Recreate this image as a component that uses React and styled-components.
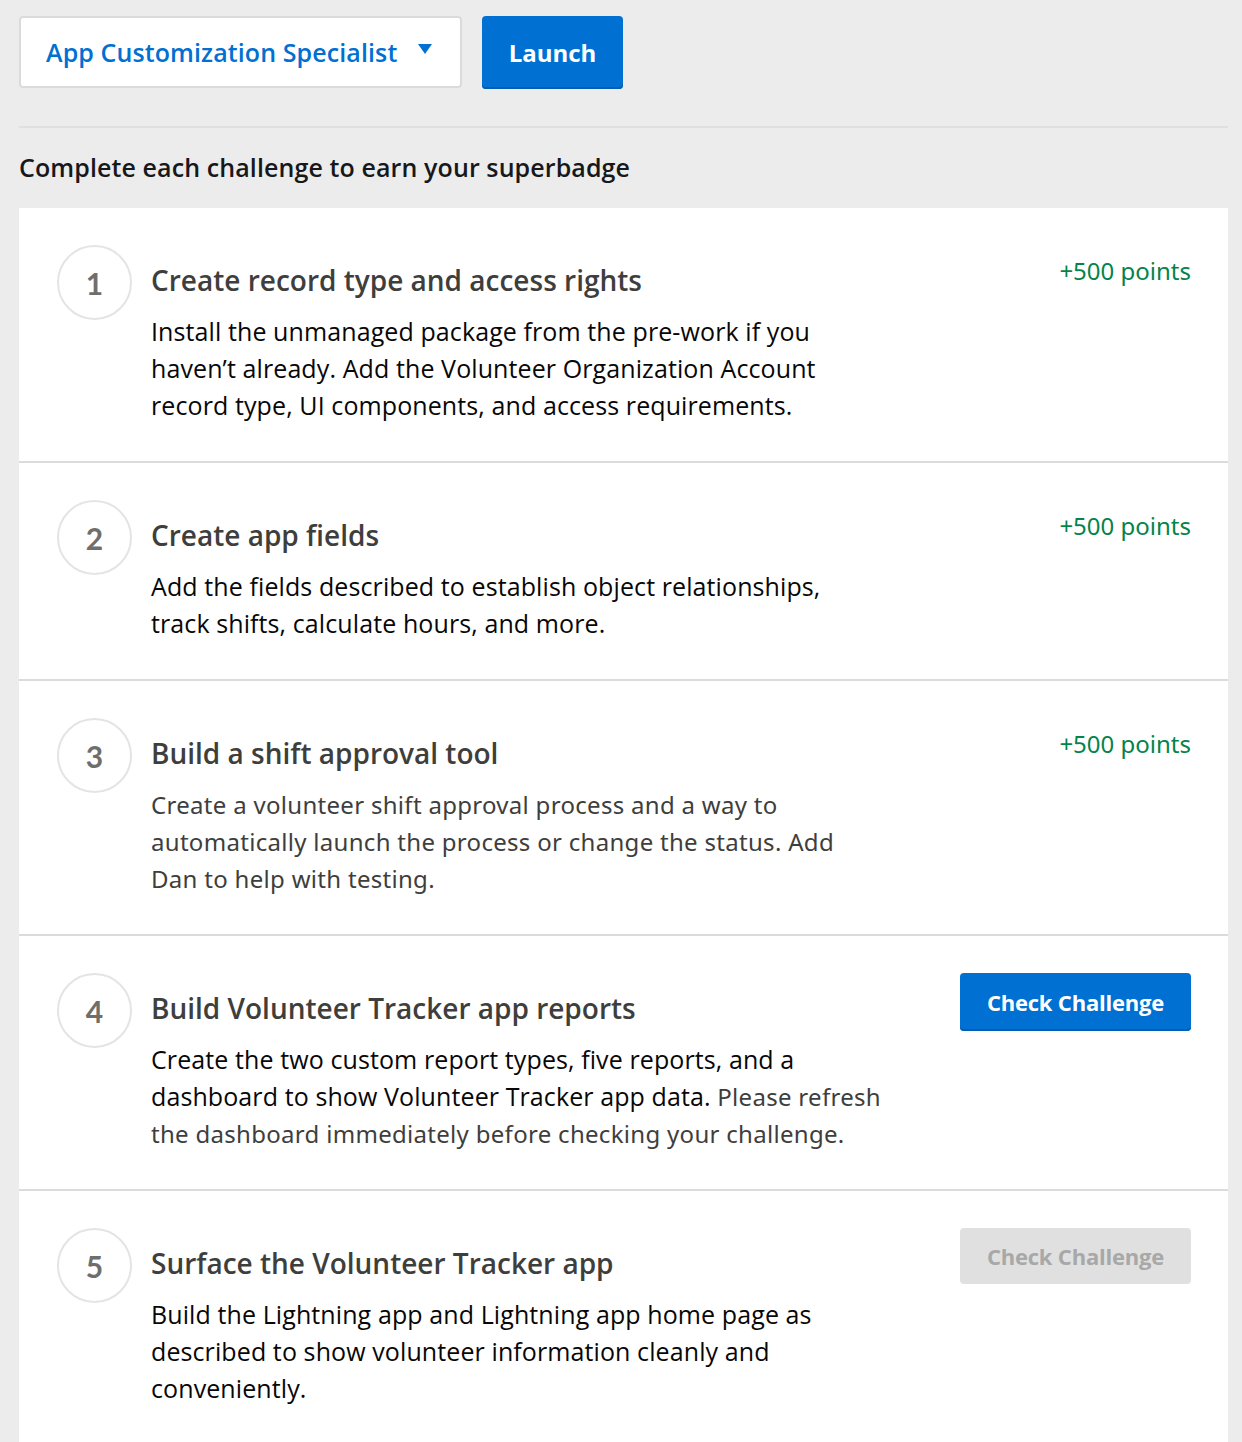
import styled, { createGlobalStyle } from "styled-components";

const GlobalStyle = createGlobalStyle`
  html, body {
    margin: 0;
    padding: 0;
    background: #ececec;
  }
  body {
    font-family: "Open Sans", "Noto Sans", sans-serif;
  }
`;

const Page = styled.div`
  padding: 16px 14px 0 19px;
`;

const TopBar = styled.div`
  display: flex;
  align-items: flex-start;
  gap: 20px;
  padding-bottom: 37px;
  border-bottom: 2px solid #e0e0e0;
`;

const Picker = styled.div`
  box-sizing: border-box;
  width: 443px;
  height: 72px;
  background: #fff;
  border: 2px solid #dddbda;
  border-radius: 4px;
  display: flex;
  align-items: center;
  padding: 0 0 0 25px;
  gap: 21px;
  color: #0070d2;
  font-size: 25px;
  font-weight: 600;
  letter-spacing: 0.1px;
  white-space: nowrap;
`;

const Caret = styled.span`
  width: 0;
  height: 0;
  border-left: 7px solid transparent;
  border-right: 7px solid transparent;
  border-top: 10px solid #0070d2;
  margin-top: -6px;
`;

const Button = styled.button`
  box-sizing: border-box;
  border: none;
  border-radius: 4px;
  font-family: "Open Sans", sans-serif;
  font-weight: 700;
  white-space: nowrap;
  color: ${(p) => (p.$disabled ? "#a8a8a8" : "#fff")};
  background: ${(p) => (p.$disabled ? "#e0e0e0" : "#0070d2")};
  box-shadow: ${(p) => (p.$disabled ? "none" : "inset 0 -2px 0 #005fb2")};
`;

const LaunchButton = styled(Button)`
  width: 141px;
  height: 73px;
  font-size: 24px;
`;

const CheckButton = styled(Button)`
  width: 231px;
  height: ${(p) => (p.$disabled ? "56px" : "58px")};
  font-size: 22px;
  letter-spacing: -0.2px;
  flex-shrink: 0;
`;

const Intro = styled.h2`
  margin: 0;
  padding: 22px 0 24px;
  font-size: 25px;
  font-weight: 600;
  color: #16181a;
  line-height: 34px;
  letter-spacing: 0.1px;
`;

const Card = styled.div`
  background: #fff;
`;

const Row = styled.div`
  display: flex;
  align-items: flex-start;
  padding: 37px 37px 37px 38px;
  border-top: ${(p) => (p.$first ? "none" : "2px solid #dddbda")};
`;

const Circle = styled.div`
  box-sizing: border-box;
  width: 75px;
  height: 75px;
  border-radius: 50%;
  border: 2px solid #e4e4e4;
  flex-shrink: 0;
  display: flex;
  align-items: center;
  justify-content: center;
  font-family: "Lato", sans-serif;
  font-size: 30px;
  font-weight: 700;
  color: #706e6b;
`;

const Body = styled.div`
  flex: 1;
  padding: 15px 0 0 19px;
  max-width: 732px;
`;

const Title = styled.h3`
  margin: 0 0 13px;
  font-size: 28px;
  font-weight: 600;
  line-height: 40px;
  color: #3e3e3c;
`;

const Text = styled.p`
  margin: 0;
  font-size: 25px;
  line-height: 37px;
  color: #080707;
  letter-spacing: 0.1px;
`;

const Muted = styled.span`
  font-family: "Noto Sans", sans-serif;
  font-size: 24px;
  color: #3e3e3c;
  letter-spacing: 0.3px;
`;

const Side = styled.div`
  margin-left: auto;
  display: flex;
  justify-content: flex-end;
`;

const Points = styled.span`
  font-family: "Noto Sans", sans-serif;
  font-size: 24px;
  line-height: 36px;
  color: #04844b;
  margin-top: 8px;
`;

const steps = [
  {
    title: "Create record type and access rights",
    text: "Install the unmanaged package from the pre-work if you haven\u2019t already. Add the Volunteer Organization Account record type, UI components, and access requirements.",
    side: "points",
  },
  {
    title: "Create app fields",
    text: "Add the fields described to establish object relationships, track shifts, calculate hours, and more.",
    side: "points",
  },
  {
    title: "Build a shift approval tool",
    muted: "Create a volunteer shift approval process and a way to automatically launch the process or change the status. Add Dan to help with testing.",
    side: "points",
  },
  {
    title: "Build Volunteer Tracker app reports",
    text: "Create the two custom report types, five reports, and a dashboard to show Volunteer Tracker app data. ",
    muted: "Please refresh the dashboard immediately before checking your challenge.",
    side: "check",
  },
  {
    title: "Surface the Volunteer Tracker app",
    text: "Build the Lightning app and Lightning app home page as described to show volunteer information cleanly and conveniently.",
    side: "disabled",
  },
];

export default function App() {
  return (
    <>
      <GlobalStyle />
      <Page>
        <TopBar>
          <Picker>
            App Customization Specialist
            <Caret />
          </Picker>
          <LaunchButton>Launch</LaunchButton>
        </TopBar>
        <Intro>Complete each challenge to earn your superbadge</Intro>
        <Card>
          {steps.map((s, i) => (
            <Row key={s.title} $first={i === 0}>
              <Circle>{i + 1}</Circle>
              <Body>
                <Title>{s.title}</Title>
                <Text>
                  {s.text}
                  {s.muted && <Muted>{s.muted}</Muted>}
                </Text>
              </Body>
              <Side>
                {s.side === "points" && <Points>+500 points</Points>}
                {s.side === "check" && <CheckButton>Check Challenge</CheckButton>}
                {s.side === "disabled" && (
                  <CheckButton $disabled>Check Challenge</CheckButton>
                )}
              </Side>
            </Row>
          ))}
        </Card>
      </Page>
    </>
  );
}
